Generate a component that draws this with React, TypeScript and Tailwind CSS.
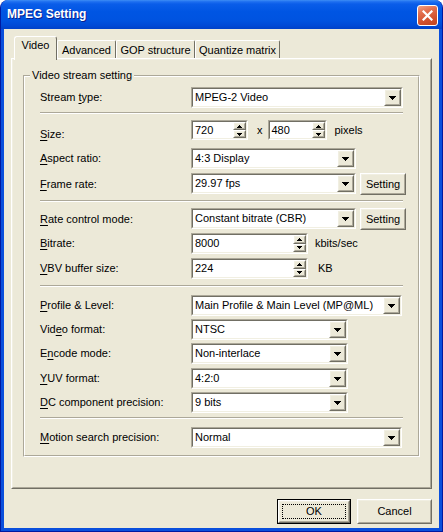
import React from "react";

const FONT = "font-['Liberation_Sans',Arial,sans-serif]";

function DownArrow() {
  return (
    <svg width="7" height="4" viewBox="0 0 7 4" shapeRendering="crispEdges">
      <path d="M0 0h7v1h-1v1h-1v1h-1v1h-1v-1h-1v-1h-1v-1h-1z" fill="#000" />
    </svg>
  );
}

function SpinUp() {
  return (
    <svg width="5" height="3" viewBox="0 0 5 3" shapeRendering="crispEdges">
      <path d="M2 0h1v1h1v1h1v1h-5v-1h1v-1h1z" fill="#000" />
    </svg>
  );
}

function SpinDown() {
  return (
    <svg width="5" height="3" viewBox="0 0 5 3" shapeRendering="crispEdges">
      <path d="M0 0h5v1h-1v1h-1v1h-1v-1h-1v-1h-1z" fill="#000" />
    </svg>
  );
}

function Raised({ cls, children }: { cls: string; children?: React.ReactNode }) {
  return (
    <div className={`${cls} bg-[#ECE9D8] border border-t-white border-l-white border-r-[#716F64] border-b-[#716F64]`}>
      <div className="flex h-full w-full items-center justify-center border border-t-[#F1EFE2] border-l-[#F1EFE2] border-r-[#ACA899] border-b-[#ACA899]">
        {children}
      </div>
    </div>
  );
}

function Sunken({ w, h, children }: { w: string; h: string; children: React.ReactNode }) {
  return (
    <div className={`${w} ${h} border border-t-[#ACA899] border-l-[#ACA899] border-r-white border-b-white`}>
      <div className="flex h-full w-full border border-t-[#716F64] border-l-[#716F64] border-r-[#F1EFE2] border-b-[#F1EFE2] bg-white">
        {children}
      </div>
    </div>
  );
}

function Combo({ w, value }: { w: string; value: string }) {
  return (
    <Sunken w={w} h="h-[21px]">
      <div className="flex flex-1 items-center overflow-hidden whitespace-nowrap pl-[2px]">{value}</div>
      <Raised cls="w-[17px] h-full">
        <DownArrow />
      </Raised>
    </Sunken>
  );
}

function SpinEdit({ w, h, value }: { w: string; h: string; value: string }) {
  return (
    <Sunken w={w} h={h}>
      <div className="flex flex-1 items-center pl-[2px]">{value}</div>
      <div className="flex h-full w-[13px] flex-col">
        <Raised cls="flex-1 w-full">
          <SpinUp />
        </Raised>
        <Raised cls="flex-1 w-full">
          <SpinDown />
        </Raised>
      </div>
    </Sunken>
  );
}

function SettingButton() {
  return (
    <div className="ml-[4px]">
      <Raised cls="w-[46px] h-[22px]">
        <span>Setting</span>
      </Raised>
    </div>
  );
}

function Label({ pre, u, post }: { pre: string; u: string; post: string }) {
  return (
    <span className="whitespace-nowrap">
      {pre}
      <span className="underline decoration-1 underline-offset-[2px]">{u}</span>
      {post}
    </span>
  );
}

function Row({
  mt,
  label,
  labelCls = "self-center",
  children,
}: {
  mt: string;
  label: React.ReactNode;
  labelCls?: string;
  children: React.ReactNode;
}) {
  return (
    <div className={`flex items-start ${mt}`}>
      <div className={`w-[151px] ${labelCls}`}>{label}</div>
      {children}
    </div>
  );
}

function Separator({ mt }: { mt: string }) {
  return <div className={`${mt} h-[2px] w-[363px] border-t border-b border-t-[#ACA899] border-b-white`} />;
}

function Tab({ label, selected, w }: { label: string; selected?: boolean; w: string }) {
  if (selected) {
    return (
      <div
        className={`${w} relative z-10 -mb-[2px] flex h-[24px] items-start justify-center rounded-tl-[3px] rounded-tr-[3px] border-t border-l border-r border-t-white border-l-white border-r-[#716F64] bg-[#ECE9D8] pt-[2px]`}
      >
        <span>{label}</span>
      </div>
    );
  }
  return (
    <div
      className={`${w} flex h-[18px] items-center justify-center rounded-tl-[2px] rounded-tr-[2px] border-t border-l border-r border-t-white border-l-white border-r-[#716F64] bg-[#ECE9D8]`}
    >
      <span className="pt-[1px]">{label}</span>
    </div>
  );
}

function PushButton({ label, isDefault }: { label: string; isDefault?: boolean }) {
  if (isDefault) {
    return (
      <div className="h-[25px] w-[74px] border border-black">
        <Raised cls="w-full h-full">
          <div className="m-[2px] flex flex-1 items-center justify-center self-stretch border border-dotted border-black">
            {label}
          </div>
        </Raised>
      </div>
    );
  }
  return (
    <Raised cls="w-[75px] h-[25px]">
      <span>{label}</span>
    </Raised>
  );
}

export default function App() {
  return (
    <div
      className={`${FONT} flex h-[532px] w-[443px] flex-col overflow-hidden rounded-t-[8px] border-x border-b border-[#0019A0] bg-[#0A4FDC] text-[11px] leading-[13px] text-black`}
    >
      {/* Title bar */}
      <div className="flex h-[29px] shrink-0 items-center bg-[linear-gradient(180deg,#3D8DF5_0%,#1E6FF0_6%,#0A5DE9_14%,#0055E3_40%,#0053E0_70%,#004AD6_88%,#0041C8_100%)] pl-[6px] pr-[4px]">
        <span className="text-[12px] font-bold text-white [text-shadow:1px_1px_#0A1E8C]">MPEG Setting</span>
        <div className="ml-auto mt-[1px] flex h-[21px] w-[21px] items-center justify-center rounded-[3px] border border-white bg-[linear-gradient(160deg,#F0A286_0%,#E3704F_30%,#D1502D_70%,#C0441F_100%)]">
          <svg width="11" height="11" viewBox="0 0 11 11">
            <path d="M1.5 1.5 L9.5 9.5 M9.5 1.5 L1.5 9.5" stroke="#fff" strokeWidth="2.2" strokeLinecap="square" />
          </svg>
        </div>
      </div>

      {/* Body */}
      <div className="mx-[3px] mb-[3px] flex flex-1 flex-col bg-[#ECE9D8] pl-[7px] pr-[7px] pt-[7px]">
        {/* Tabs */}
        <div className="flex h-[22px] items-end pl-[3px]">
          <Tab label="Video" selected w="w-[43px]" />
          <Tab label="Advanced" w="w-[59px]" />
          <Tab label="GOP structure" w="w-[79px]" />
          <Tab label="Quantize matrix" w="w-[85px]" />
        </div>

        {/* Tab panel */}
        <div className="h-[431px] w-[421px] border border-t-white border-l-white border-r-[#716F64] border-b-[#716F64]">
          <div className="h-full w-full border border-t-[#F1EFE2] border-l-[#F1EFE2] border-r-[#ACA899] border-b-[#ACA899]">
            {/* Group box */}
            <div className="relative ml-[10px] mt-[15px] w-[397px] border border-t-[#ACA899] border-l-[#ACA899] border-r-white border-b-white">
              <span className="absolute left-[6px] top-[-7px] bg-[#ECE9D8] px-[2px]">Video stream setting</span>
              <div className="border border-t-white border-l-white border-r-[#ACA899] border-b-[#ACA899] pb-[7px] pl-[15px]">
                <Row mt="mt-[10px]" label={<Label pre="Stream " u="t" post="ype:" />}>
                  <Combo w="w-[212px]" value="MPEG-2 Video" />
                </Row>
                <Separator mt="mt-[4px]" />
                <Row mt="mt-[6px]" labelCls="self-start mt-[8px]" label={<Label pre="" u="S" post="ize:" />}>
                  <SpinEdit w="w-[57px]" h="h-[20px]" value="720" />
                  <span className="ml-[9px] self-center">x</span>
                  <div className="ml-[5px]">
                    <SpinEdit w="w-[59px]" h="h-[20px]" value="480" />
                  </div>
                  <span className="ml-[8px] self-center">pixels</span>
                </Row>
                <Row mt="mt-[7px]" label={<Label pre="" u="A" post="spect ratio:" />}>
                  <Combo w="w-[165px]" value="4:3 Display" />
                </Row>
                <Row mt="mt-[4px]" label={<Label pre="" u="F" post="rame rate:" />}>
                  <Combo w="w-[165px]" value="29.97 fps" />
                  <SettingButton />
                </Row>
                <Separator mt="mt-[5px]" />
                <Row mt="mt-[6px]" label={<Label pre="" u="R" post="ate control mode:" />}>
                  <Combo w="w-[165px]" value="Constant bitrate (CBR)" />
                  <SettingButton />
                </Row>
                <Row mt="mt-[3px]" label={<Label pre="" u="B" post="itrate:" />}>
                  <SpinEdit w="w-[117px]" h="h-[21px]" value="8000" />
                  <span className="ml-[7px] self-center">kbits/sec</span>
                </Row>
                <Row mt="mt-[4px]" label={<Label pre="" u="V" post="BV buffer size:" />}>
                  <SpinEdit w="w-[117px]" h="h-[21px]" value="224" />
                  <span className="ml-[10px] self-center">KB</span>
                </Row>
                <Separator mt="mt-[6px]" />
                <Row mt="mt-[8px]" label={<Label pre="" u="P" post="rofile & Level:" />}>
                  <Combo w="w-[211px]" value="Main Profile & Main Level (MP@ML)" />
                </Row>
                <Row mt="mt-[3px]" label={<Label pre="Vid" u="e" post="o format:" />}>
                  <Combo w="w-[157px]" value="NTSC" />
                </Row>
                <Row mt="mt-[3px]" label={<Label pre="E" u="n" post="code mode:" />}>
                  <Combo w="w-[157px]" value="Non-interlace" />
                </Row>
                <Row mt="mt-[4px]" label={<Label pre="" u="Y" post="UV format:" />}>
                  <Combo w="w-[157px]" value="4:2:0" />
                </Row>
                <Row mt="mt-[3px]" label={<Label pre="" u="D" post="C component precision:" />}>
                  <Combo w="w-[157px]" value="9 bits" />
                </Row>
                <Separator mt="mt-[4px]" />
                <Row mt="mt-[8px]" label={<Label pre="" u="M" post="otion search precision:" />}>
                  <Combo w="w-[211px]" value="Normal" />
                </Row>
              </div>
            </div>
          </div>
        </div>

        {/* Buttons */}
        <div className="mt-[10px] flex justify-end gap-[6px]">
          <PushButton label="OK" isDefault />
          <PushButton label="Cancel" />
        </div>
      </div>
    </div>
  );
}
